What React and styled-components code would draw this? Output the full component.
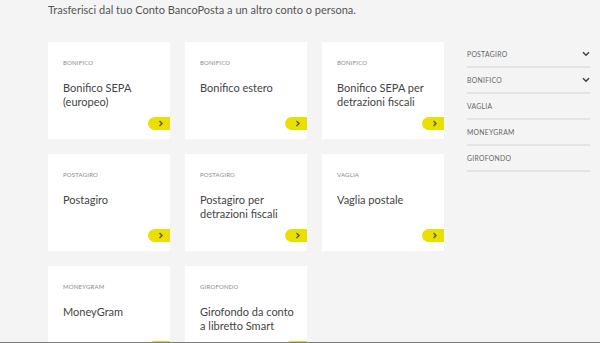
import React from 'react';
import styled, { createGlobalStyle } from 'styled-components';

const Global = createGlobalStyle`
  html, body {
    margin: 0;
    padding: 0;
    background: #f4f4f4;
  }
  body {
    font-family: Lato, "Open Sans", sans-serif;
    color: #4a4a4a;
  }
`;

const Page = styled.div`
  box-sizing: border-box;
  width: 600px;
  height: 343px;
  overflow: hidden;
  padding: 0 0 0 48px;
  border-bottom: 1px solid #7c7c7c;
`;

const Intro = styled.p`
  margin: 0;
  padding-top: 3px;
  height: 39px;
  font-size: 11px;
  color: #555;
`;

const Layout = styled.div`
  display: flex;
  gap: 23px;
`;

const Grid = styled.div`
  display: grid;
  grid-template-columns: repeat(3, 122px);
  grid-auto-rows: 97px;
  gap: 15px;
`;

const Card = styled.div`
  position: relative;
  background: #fff;
  padding: 17px 10px 0 15px;
  box-sizing: border-box;
`;

const Label = styled.div`
  font-size: 6px;
  letter-spacing: 0.2px;
  text-transform: uppercase;
  color: #8a8a8a;
`;

const Title = styled.div`
  margin-top: 15px;
  font-size: 11px;
  line-height: 13.5px;
  color: #444;
`;

const Go = styled.div`
  position: absolute;
  right: 0;
  bottom: 9px;
  width: 22px;
  height: 13px;
  border-radius: 7px 0 0 7px;
  background: #ebdf00;
  display: flex;
  align-items: center;
  justify-content: center;
  padding-left: 3px;
  box-sizing: border-box;
`;

const Side = styled.nav`
  width: 123px;
  padding-top: 0;
`;

const SideItem = styled.div`
  display: flex;
  align-items: center;
  justify-content: space-between;
  height: 24px;
  border-bottom: 2px solid #e4e4e4;
  font-size: 6.8px;
  letter-spacing: 0.3px;
  color: #666;
`;

const cards = [
  ['Bonifico', 'Bonifico SEPA (europeo)'],
  ['Bonifico', 'Bonifico estero'],
  ['Bonifico', 'Bonifico SEPA per detrazioni fiscali'],
  ['Postagiro', 'Postagiro'],
  ['Postagiro', 'Postagiro per detrazioni fiscali'],
  ['Vaglia', 'Vaglia postale'],
  ['MoneyGram', 'MoneyGram'],
  ['Girofondo', 'Girofondo da conto a libretto Smart'],
];

const side = [
  ['POSTAGIRO', true],
  ['BONIFICO', true],
  ['VAGLIA', false],
  ['MONEYGRAM', false],
  ['GIROFONDO', false],
];

const Arrow = () => (
  <svg width="6" height="7" viewBox="0 0 6 7">
    <path d="M1.5 1l2.5 2.5L1.5 6" fill="none" stroke="#555" strokeWidth="1.4" />
  </svg>
);

const Chevron = () => (
  <svg width="8" height="6" viewBox="0 0 8 6">
    <path d="M1 1.2l3 3 3-3" fill="none" stroke="#444" strokeWidth="1.6" />
  </svg>
);

export default function App() {
  return (
    <Page>
      <Global />
      <Intro>Trasferisci dal tuo Conto BancoPosta a un altro conto o persona.</Intro>
      <Layout>
        <Grid>
          {cards.map(([label, title], i) => (
            <Card key={i}>
              <Label>{label}</Label>
              <Title>{title}</Title>
              <Go><Arrow /></Go>
            </Card>
          ))}
        </Grid>
        <Side>
          {side.map(([name, open]) => (
            <SideItem key={name}>
              <span>{name}</span>
              {open && <Chevron />}
            </SideItem>
          ))}
        </Side>
      </Layout>
    </Page>
  );
}
